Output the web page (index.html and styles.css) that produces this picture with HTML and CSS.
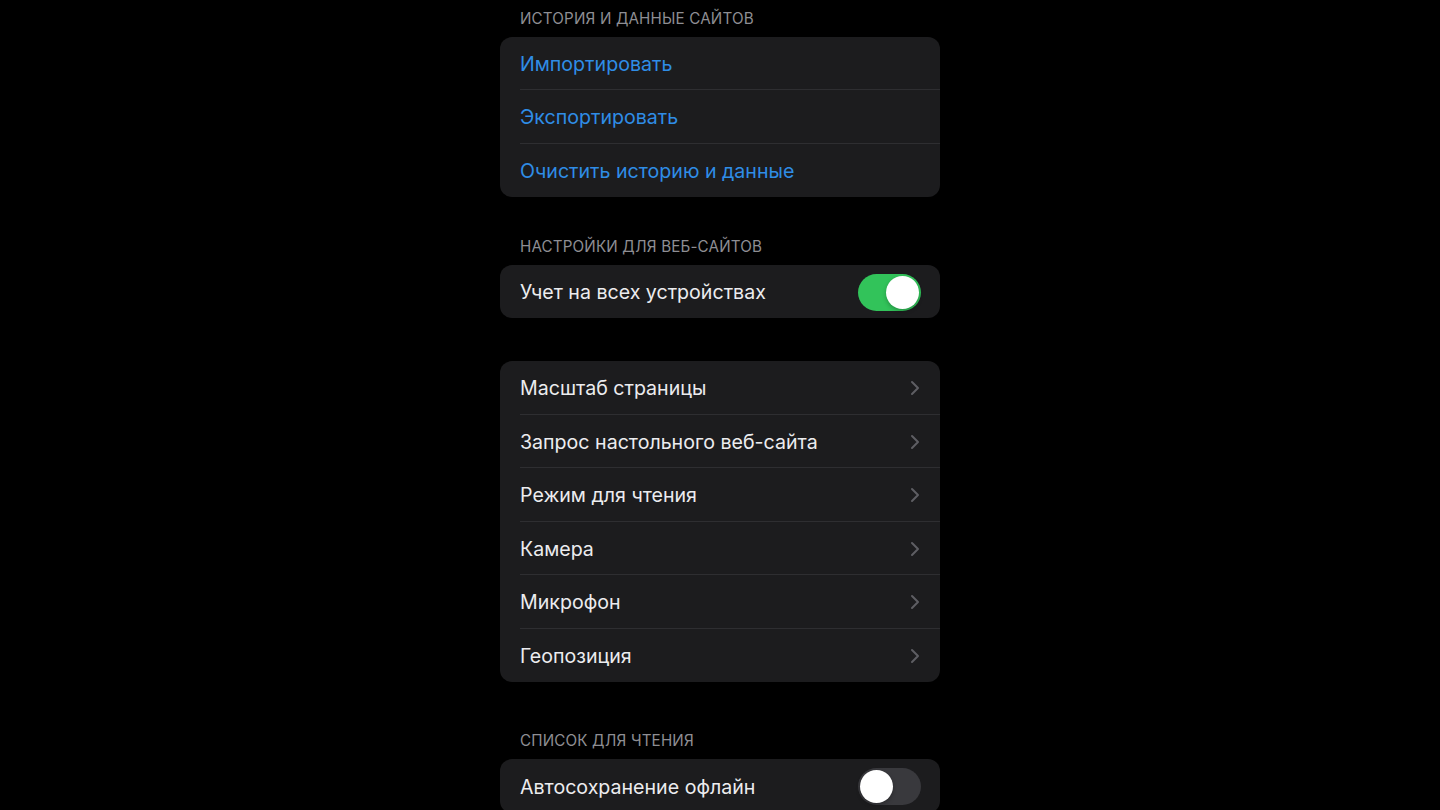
FILE: index.html
```html
<!DOCTYPE html>
<html lang="ru">
<head>
<meta charset="utf-8">
<title>Настройки Safari</title>
<link rel="stylesheet" href="styles.css">
</head>
<body>
<main class="page">
  <section class="section section-first">
    <h2 class="section-header">История и данные сайтов</h2>
    <div class="group group-compact">
      <div class="row row-link">Импортировать</div>
      <div class="row row-link">Экспортировать</div>
      <div class="row row-link">Очистить историю и данные</div>
    </div>
  </section>

  <section class="section">
    <h2 class="section-header">Настройки для веб-сайтов</h2>
    <div class="group">
      <div class="row">
        <span class="label">Учет на всех устройствах</span>
        <span class="toggle toggle-on"><span class="knob"></span></span>
      </div>
    </div>
  </section>

  <section class="section section-noheader">
    <div class="group">
      <div class="row"><span class="label">Масштаб страницы</span><svg class="chevron" viewBox="0 0 10 16"><path d="M2 2 L8 8 L2 14"/></svg></div>
      <div class="row"><span class="label">Запрос настольного веб-сайта</span><svg class="chevron" viewBox="0 0 10 16"><path d="M2 2 L8 8 L2 14"/></svg></div>
      <div class="row"><span class="label">Режим для чтения</span><svg class="chevron" viewBox="0 0 10 16"><path d="M2 2 L8 8 L2 14"/></svg></div>
      <div class="row"><span class="label">Камера</span><svg class="chevron" viewBox="0 0 10 16"><path d="M2 2 L8 8 L2 14"/></svg></div>
      <div class="row"><span class="label">Микрофон</span><svg class="chevron" viewBox="0 0 10 16"><path d="M2 2 L8 8 L2 14"/></svg></div>
      <div class="row"><span class="label">Геопозиция</span><svg class="chevron" viewBox="0 0 10 16"><path d="M2 2 L8 8 L2 14"/></svg></div>
    </div>
  </section>

  <section class="section section-last">
    <h2 class="section-header">Список для чтения</h2>
    <div class="group">
      <div class="row">
        <span class="label">Автосохранение офлайн</span>
        <span class="toggle toggle-off"><span class="knob"></span></span>
      </div>
    </div>
  </section>
</main>
</body>
</html>
```

FILE: styles.css
```css
html, body {
  margin: 0;
  padding: 0;
  background: #000;
  height: 100%;
  overflow: hidden;
}

body {
  font-family: Inter, "Noto Sans", "Liberation Sans", sans-serif;
  color: #ebebf0;
}

.page {
  width: 440px;
  margin: 0 auto;
  padding-top: 9px;
}

.section {
  margin-top: 40px;
}

.section-first {
  margin-top: 0;
}

.section-noheader {
  margin-top: 43px;
}

.section-last {
  margin-top: 49px;
}

.section-header {
  margin: 0 0 8px;
  padding: 0 20px;
  height: 20px;
  line-height: 20px;
  font-size: 15.2px;
  font-weight: 400;
  text-transform: uppercase;
  color: #8e8e93;
  letter-spacing: 0.15px;
}

.group {
  background: #1c1c1e;
  border-radius: 12px;
  overflow: hidden;
}

.row {
  height: 53.5px;
  box-sizing: border-box;
  margin-left: 20px;
  padding-right: 20px;
  padding-top: 1px;
  display: flex;
  align-items: center;
  justify-content: space-between;
  font-size: 19.6px;
  letter-spacing: 0;
  border-bottom: 1px solid #2e2e31;
}

.group-compact .row {
  height: 53.33px;
}

.row:last-child {
  border-bottom: none;
}

.row-link {
  color: #2f8de6;
}

.label {
  color: #ececef;
}

.chevron {
  width: 10px;
  height: 16px;
  fill: none;
  stroke: #5e5e63;
  stroke-width: 2;
  stroke-linecap: round;
  stroke-linejoin: round;
  margin-right: 0;
}

.toggle {
  width: 63px;
  height: 37px;
  border-radius: 19px;
  display: flex;
  align-items: center;
  padding: 0 2px;
  box-sizing: border-box;
  margin-right: -1px;
}

.toggle-on {
  background: #32c35a;
  justify-content: flex-end;
}

.toggle-off {
  background: #39393d;
  justify-content: flex-start;
}

.knob {
  width: 33px;
  height: 33px;
  border-radius: 50%;
  background: #fff;
  box-shadow: 0 2px 4px rgba(0, 0, 0, 0.25);
}
```
